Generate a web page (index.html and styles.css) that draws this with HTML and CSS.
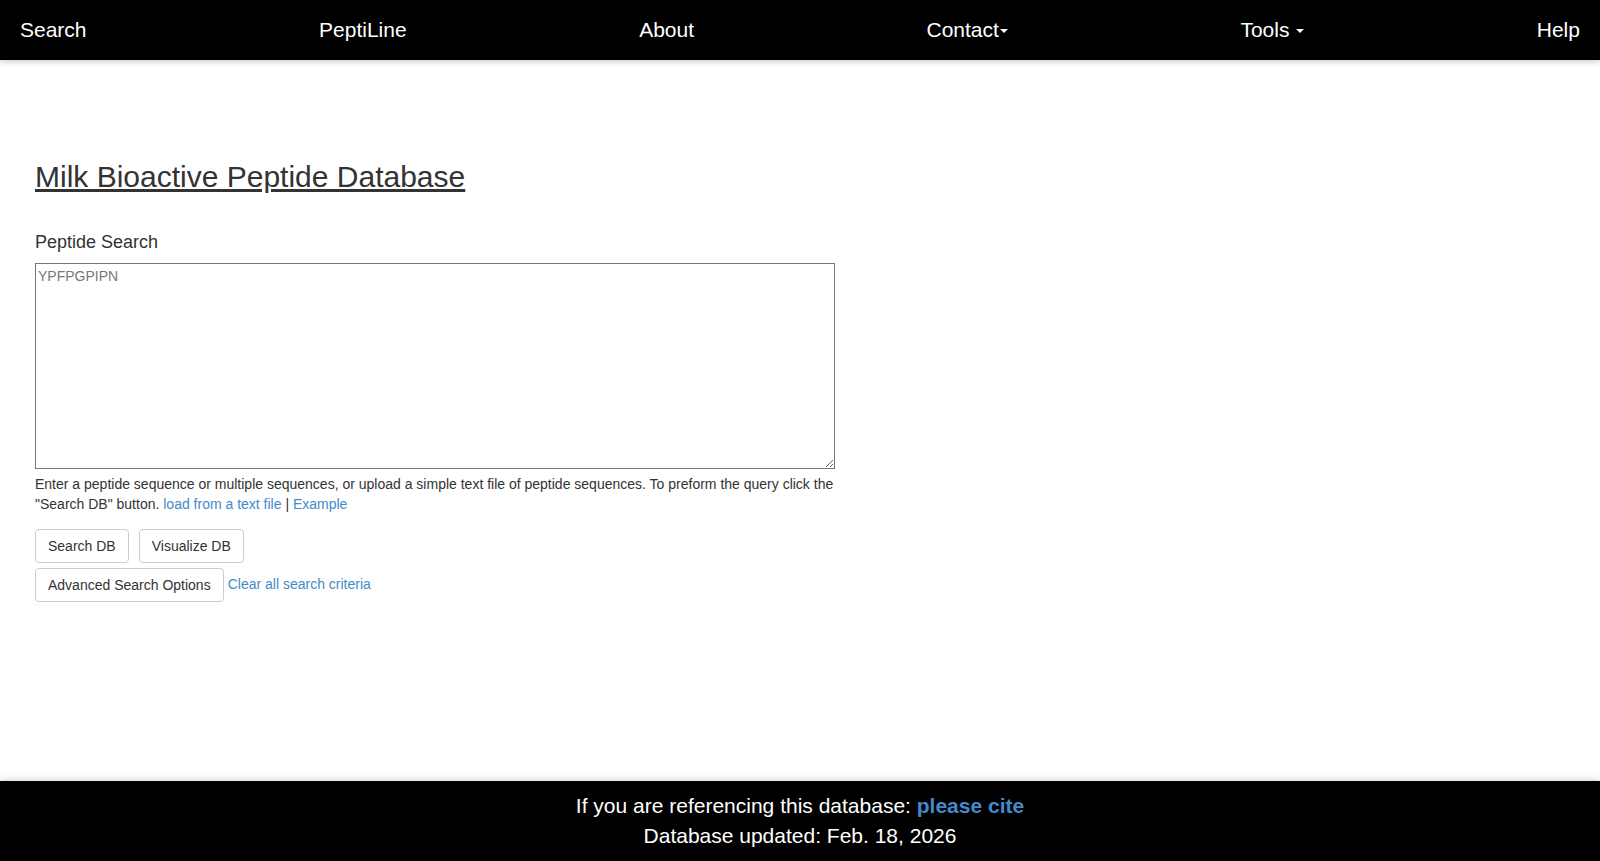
FILE: index.html
```html
<!DOCTYPE html>
<html lang="en">
<head>
    <meta charset="UTF-8">
    <meta name="viewport" content="width=device-width, initial-scale=1.0">
    <title>Milk Bioactive Peptide Database</title>
    <link rel="stylesheet" href="styles.css">
</head>
<body>

<nav class="topnav">
    <a href="#">Search</a>
    <a href="#">PeptiLine</a>
    <a href="#">About</a>
    <a href="#" class="dropdown">Contact<span class="caret"></span></a>
    <a href="#" class="dropdown">Tools <span class="caret"></span></a>
    <a href="#">Help</a>
</nav>

<main class="content">
    <h2 class="page-title"><a href="#">Milk Bioactive Peptide Database</a></h2>

    <label class="search-label" for="peptides">Peptide Search</label>
    <textarea id="peptides" class="search-box" placeholder="YPFPGPIPN"></textarea>
    <p class="help-text">
        Enter a peptide sequence or multiple sequences, or upload a simple text file of peptide sequences. To preform the query click the "Search DB" button.
        <a href="#">load from a text file</a> | <a href="#">Example</a>
    </p>

    <div class="btn-row">
        <button class="btn">Search DB</button>
        <button class="btn">Visualize DB</button>
    </div>
    <div class="btn-row tight">
        <button class="btn">Advanced Search Options</button>
        <a href="#" class="clear-link">Clear all search criteria</a>
    </div>
</main>

<footer class="site-footer">
    <div>If you are referencing this database: <a href="#">please cite</a></div>
    <div>Database updated: Feb. 18, 2026</div>
</footer>

</body>
</html>
```

FILE: styles.css
```css
body {
    font-family: 'Liberation Sans', Arial, sans-serif;
    font-size: 14px;
    line-height: 20px;
    color: #333;
    margin: 0;
    padding: 0;
    min-height: 100vh;
    display: flex;
    flex-direction: column;
}

a {
    color: #428bca;
    text-decoration: none;
}

.topnav {
    height: 60px;
    background-color: #000;
    display: flex;
    justify-content: space-between;
    align-items: center;
    padding: 0 20px;
    box-shadow: 0 2px 6px rgba(0, 0, 0, 0.2);
}

.topnav a {
    color: #fff;
    font-size: 21px;
    line-height: 24px;
}

.caret {
    display: inline-block;
    width: 0;
    height: 0;
    margin-left: 1px;
    vertical-align: middle;
    border-top: 4px solid #fff;
    border-left: 4px solid transparent;
    border-right: 4px solid transparent;
}

.content {
    flex: 1;
    padding: 100px 35px 0;
}

.page-title {
    margin: 0;
    font-size: 30px;
    line-height: 33px;
    font-weight: normal;
}

.page-title a {
    color: #333;
    text-decoration: underline;
}

.search-label {
    display: block;
    margin: 36px 0 8px;
    font-size: 18px;
    line-height: 26px;
}

.search-box {
    display: block;
    box-sizing: border-box;
    width: 800px;
    height: 206px;
    margin: 0;
    padding: 4px 2px 2px;
    border: 1px solid #767676;
    font-family: 'Liberation Sans', Arial, sans-serif;
    font-size: 14px;
}

.search-box::placeholder {
    color: #777;
}

.help-text {
    width: 800px;
    margin: 5px 0 15px;
}

.btn-row {
    display: flex;
    align-items: center;
    gap: 10px;
}

.btn-row.tight {
    gap: 4px;
    margin-top: 5px;
}

.clear-link {
    margin-bottom: 3px;
}

.btn {
    font-family: 'Liberation Sans', Arial, sans-serif;
    font-size: 14px;
    line-height: 20px;
    color: #333;
    background-color: #fff;
    border: 1px solid #ccc;
    border-radius: 4px;
    padding: 6px 12px;
    cursor: pointer;
}

.site-footer {
    height: 80px;
    box-sizing: border-box;
    padding: 10px 0;
    background-color: #000;
    color: #fff;
    text-align: center;
    font-size: 21px;
    line-height: 30px;
    box-shadow: 0 -2px 6px rgba(0, 0, 0, 0.15);
}

.site-footer a {
    font-weight: bold;
}
```
